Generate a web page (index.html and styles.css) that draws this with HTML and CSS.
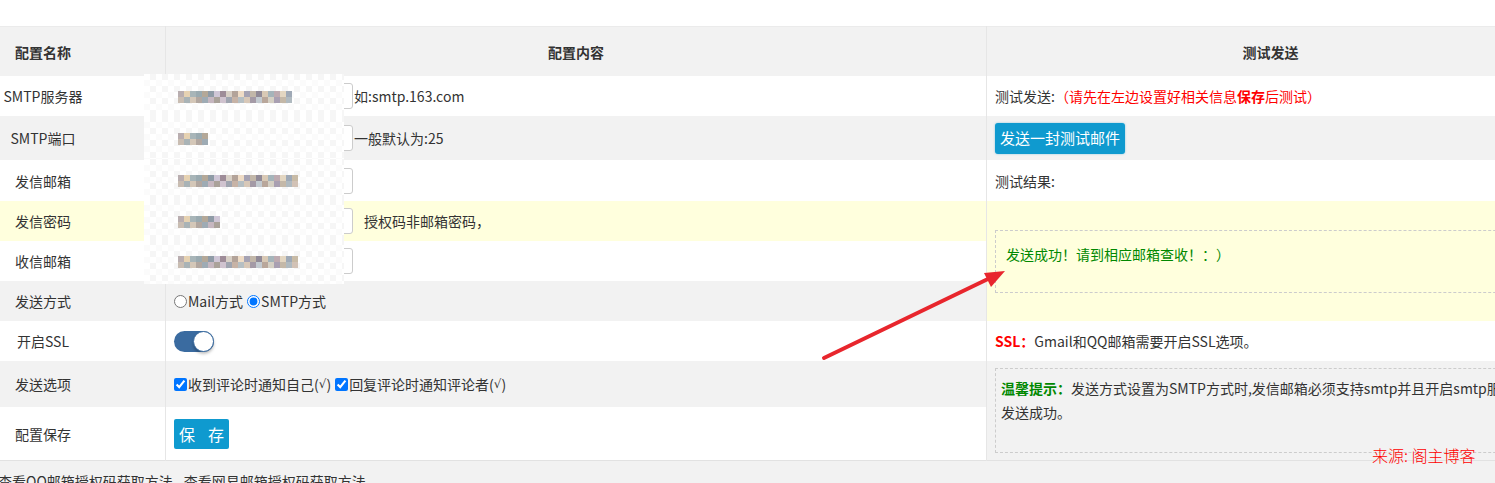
FILE: index.html
```html
<!DOCTYPE html>
<html lang="zh-CN">
<head>
<meta charset="UTF-8">
<title>邮件配置</title>
<link rel="stylesheet" href="styles.css">
</head>
<body>
<div class="page">
<table class="config">
    <colgroup>
        <col class="c-name">
        <col class="c-value">
        <col class="c-test">
    </colgroup>
    <tr class="head">
        <th>配置名称</th>
        <th>配置内容</th>
        <th>测试发送</th>
    </tr>
    <tr class="r1">
        <td class="name">SMTP服务器</td>
        <td class="value"><div class="line"><div class="field"><span class="mosaic"><i class="pix w114"></i></span></div>如:smtp.163.com</div></td>
        <td class="test">测试发送:<span class="warn">（请先在左边设置好相关信息<b>保存</b>后测试）</span></td>
    </tr>
    <tr class="r2 grey">
        <td class="name">SMTP端口</td>
        <td class="value"><div class="line"><div class="field"><span class="mosaic"><i class="pix w30"></i></span></div>一般默认为:25</div></td>
        <td class="test"><span class="btn send">发送一封测试邮件</span></td>
    </tr>
    <tr class="r3">
        <td class="name">发信邮箱</td>
        <td class="value"><div class="line"><div class="field"><span class="mosaic"><i class="pix w120"></i></span></div></div></td>
        <td class="test">测试结果:</td>
    </tr>
    <tr class="r4 hover">
        <td class="name">发信密码</td>
        <td class="value"><div class="line"><div class="field"><span class="mosaic"><i class="pix w42"></i></span></div><span class="note">授权码非邮箱密码，</span></div></td>
        <td class="test" rowspan="3"><div class="result">发送成功！请到相应邮箱查收！：）</div></td>
    </tr>
    <tr class="r5">
        <td class="name">收信邮箱</td>
        <td class="value"><div class="line"><div class="field"><span class="mosaic"><i class="pix w120"></i></span></div></div></td>
    </tr>
    <tr class="r6 grey">
        <td class="name">发送方式</td>
        <td class="value"><div class="line"><label><input type="radio" name="mode">Mail方式</label> <label><input type="radio" name="mode" checked>SMTP方式</label></div></td>
    </tr>
    <tr class="r7">
        <td class="name">开启SSL</td>
        <td class="value"><div class="line"><span class="switch"></span></div></td>
        <td class="test"><b class="red">SSL：</b>Gmail和QQ邮箱需要开启SSL选项。</td>
    </tr>
    <tr class="r8 grey">
        <td class="name">发送选项</td>
        <td class="value"><div class="line"><label><input type="checkbox" checked>收到评论时通知自己(<span class="sq">√</span>)</label> <label><input type="checkbox" checked>回复评论时通知评论者(<span class="sq">√</span>)</label></div></td>
        <td class="test" rowspan="2"><div class="tips"><b class="green">温馨提示：</b>发送方式设置为SMTP方式时,发信邮箱必须支持smtp并且开启smtp服务,否则无法<br>发送成功。</div></td>
    </tr>
    <tr class="r9">
        <td class="name">配置保存</td>
        <td class="value"><div class="line"><span class="btn save"><span>保</span><span>存</span></span></div></td>
    </tr>
    <tr class="foot grey">
        <td colspan="3"><a>查看QQ邮箱授权码获取方法</a><a>查看网易邮箱授权码获取方法</a></td>
    </tr>
</table>

<svg class="arrow" width="1495" height="483" viewBox="0 0 1495 483">
    <line x1="824" y1="358" x2="990" y2="278" stroke="#e8262d" stroke-width="4" stroke-linecap="round"/>
    <polygon points="1005,271 984,273 991,287" fill="#e8262d"/>
</svg>

<div class="stamp">来源: 阁主博客</div>
</div>
</body>
</html>
```

FILE: styles.css
```css
html, body {
    margin: 0;
    overflow: hidden;
}
body {
    width: 1495px;
    height: 483px;
    font-family: "Noto Sans CJK SC", "Liberation Sans", sans-serif;
    font-size: 14px;
    color: #333;
    background: #fff;
    text-spacing-trim: space-all;
}
.page {
    position: relative;
    padding-top: 26px;
}

.config {
    border-collapse: collapse;
    table-layout: fixed;
    width: 1634px;
    margin-left: -80px;
    border-top: 1px solid #ebebeb;
}
.c-name { width: 245px; }
.c-value { width: 821px; }
.c-test { width: 568px; }

.config th,
.config td {
    padding: 0 8px;
    vertical-align: middle;
    border-left: 1px solid #e6e6e6;
    border-right: 1px solid #e6e6e6;
    line-height: 20px;
}
.config th {
    font-weight: bold;
    text-align: center;
}
.config tr { background: #fff; }
.config tr.grey, .config tr.head { background: #f2f2f2; }
.config tr.hover { background: #ffffdd; }

.head th { height: 49px; }
.r1 td { height: 40px; }
.r2 td { height: 44px; }
.r3 td { height: 41px; }
.r4 td, .r5 td, .r6 td, .r7 td { height: 40px; }
.r8 td { height: 46px; }
.r9 td { height: 53px; }
.foot td {
    height: 40px;
    border-top: 1px solid #e2e2e2;
    padding-left: 77px;
    white-space: nowrap;
}
.foot a { color: #333; }
.foot a + a { margin-left: 11px; }

.name { text-align: center; }

.line {
    display: flex;
    align-items: center;
    white-space: nowrap;
}
.line label {
    display: inline-flex;
    align-items: center;
}
.line input {
    margin: 0 1px 0 0;
}
.line label + label { margin-left: 4px; }
.sq {
    font-family: "DejaVu Sans", sans-serif;
    font-size: 12px;
}

.field {
    position: relative;
    width: 180px;
    height: 26px;
    box-sizing: border-box;
    border: 1px solid #ccc;
    border-radius: 3px;
    background: #fff;
    margin-left: -1px;
    margin-right: 1px;
}
/* redaction mosaic over the filled-in values */
.mosaic {
    position: absolute;
    left: -30px;
    top: -10px;
    width: 200px;
    height: 45px;
    display: flex;
    align-items: center;
    padding-left: 34px;
    box-sizing: border-box;
    background-color: #fff;
    background-image: conic-gradient(#f6f6f6 25%, transparent 0 50%, #fbfbfb 0 75%, transparent 0);
    background-size: 12px 12px;
}
.pix {
    display: block;
    height: 12px;
    background-image:
        linear-gradient(90deg, #b9aeb0 0 6px, #e6d2b2 6px 12px, #a8b5b8 12px 18px, #9aaab0 18px 24px, #b4a898 24px 30px, #8f9ba6 30px 36px, #cfc6d6 36px 42px, #9e8c98 42px 48px, #d8d0c6 48px 54px, #b3a399 54px 60px, #efdcc6 60px 66px, #a6a3b3 66px 72px, #c2b7a9 72px 78px, #918a97 78px 84px, #d9c9b5 84px 90px, #a5b4ba 90px 96px, #bdaab0 96px 102px, #e3d6c1 102px 108px, #9fa9b6 108px 114px, #c8bba6 114px 120px),
        linear-gradient(90deg, #c9bdb2 0 6px, #a9b3b6 6px 12px, #d4c7b8 12px 18px, #b2a7a0 18px 24px, #9eabb4 24px 30px, #c6b7c0 30px 36px, #aaa29a 36px 42px, #d0c3cf 42px 48px, #a0a5b0 48px 54px, #c7b3a6 54px 60px, #b6bfc3 60px 66px, #d8c8b8 66px 72px, #a49aa6 72px 78px, #c3cad0 78px 84px, #b9a79b 84px 90px, #d5d0c4 90px 96px, #a9a0b2 96px 102px, #c4b8a8 102px 108px, #b0bac0 108px 114px, #d2c2b6 114px 120px);
    background-size: 100% 6px, 100% 6px;
    background-position: 0 0, 0 6px;
    background-repeat: no-repeat;
}
.w114 { width: 114px; }
.w30 { width: 30px; }
.w120 { width: 120px; }
.w42 { width: 42px; }

.note { margin-left: 10px; }

.switch {
    position: relative;
    display: block;
    width: 40px;
    height: 21px;
    border-radius: 11px;
    background: #3a6ba0;
}
.switch::after {
    content: "";
    position: absolute;
    right: 0;
    top: 0;
    width: 21px;
    height: 21px;
    box-sizing: border-box;
    border-radius: 50%;
    border: 1px solid #3a6ba0;
    background: #fff;
    box-shadow: 0 2px 3px rgba(0, 0, 0, 0.25);
}

.btn {
    display: inline-flex;
    align-items: center;
    color: #fff;
    background: #0f9acf;
    border-radius: 3px;
}
.send {
    height: 31px;
    padding: 0 5px;
    font-size: 15px;
    box-shadow: 0 0 2px rgba(15, 154, 207, 0.5);
}
.save {
    height: 30px;
    padding: 0 5px;
    gap: 13px;
    font-size: 16px;
    border-radius: 2px;
}

.warn { color: #f00; }
.red { color: #f00; }
.green { color: #080; }

.result {
    border: 1px dashed #ccc;
    padding: 13px 10px 28px;
    color: #080;
    white-space: nowrap;
    overflow: hidden;
}
.tips {
    border: 1px dashed #ccc;
    padding: 7px 5px 28px;
    line-height: 24px;
    white-space: nowrap;
    overflow: hidden;
}

.arrow {
    position: absolute;
    left: 0;
    top: 0;
    pointer-events: none;
}
.stamp {
    position: absolute;
    left: 1372px;
    top: 445px;
    color: #f00;
    font-size: 16px;
    font-weight: 300;
    line-height: 20px;
    white-space: nowrap;
}
```
